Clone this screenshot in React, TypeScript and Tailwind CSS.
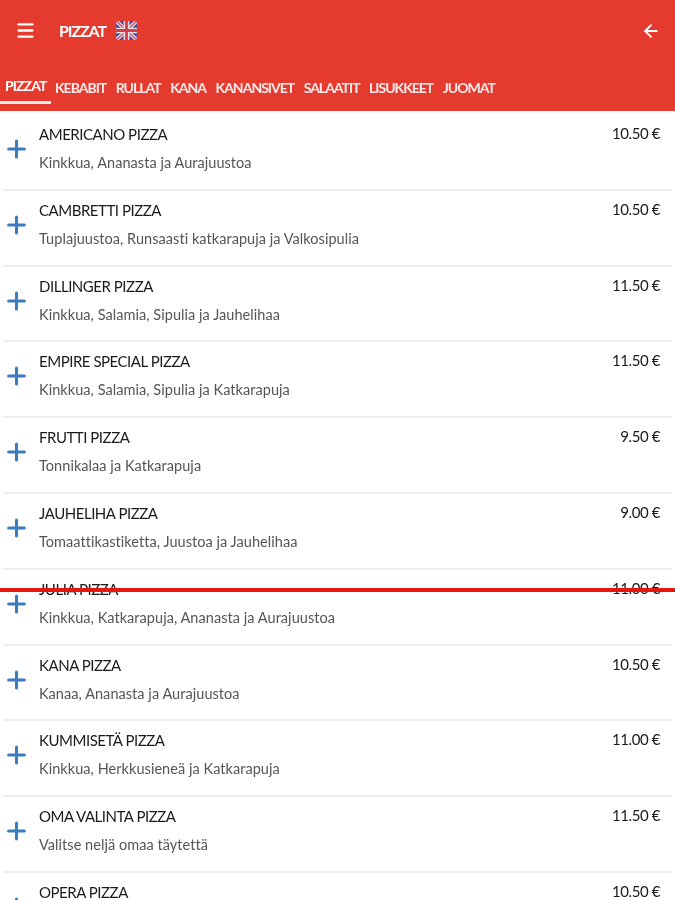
import React from 'react';
import { Menu, ArrowLeft, Plus } from 'lucide-react';

interface Pizza {
    name: string;
    description: string;
    price: string;
}

const tabs = ['KEBABIT', 'RULLAT', 'KANA', 'KANANSIVET', 'SALAATIT', 'LISUKKEET', 'JUOMAT'];

const pizzas: Pizza[] = [
    { name: 'AMERICANO PIZZA', description: 'Kinkkua, Ananasta ja Aurajuustoa', price: '10.50 €' },
    { name: 'CAMBRETTI PIZZA', description: 'Tuplajuustoa, Runsaasti katkarapuja ja Valkosipulia', price: '10.50 €' },
    { name: 'DILLINGER PIZZA', description: 'Kinkkua, Salamia, Sipulia ja Jauhelihaa', price: '11.50 €' },
    { name: 'EMPIRE SPECIAL PIZZA', description: 'Kinkkua, Salamia, Sipulia ja Katkarapuja', price: '11.50 €' },
    { name: 'FRUTTI PIZZA', description: 'Tonnikalaa ja Katkarapuja', price: '9.50 €' },
    { name: 'JAUHELIHA PIZZA', description: 'Tomaattikastiketta, Juustoa ja Jauhelihaa', price: '9.00 €' },
    { name: 'JULIA PIZZA', description: 'Kinkkua, Katkarapuja, Ananasta ja Aurajuustoa', price: '11.00 €' },
    { name: 'KANA PIZZA', description: 'Kanaa, Ananasta ja Aurajuustoa', price: '10.50 €' },
    { name: 'KUMMISETÄ PIZZA', description: 'Kinkkua, Herkkusieneä ja Katkarapuja', price: '11.00 €' },
    { name: 'OMA VALINTA PIZZA', description: 'Valitse neljä omaa täytettä', price: '11.50 €' },
    { name: 'OPERA PIZZA', description: 'Kinkkua, Salamia ja Ananasta', price: '10.50 €' }
];

const Flag = () => (
    <svg width="21" height="19" viewBox="0 0 22 20" className="ml-[10px] rounded-[3px]">
        <rect width="22" height="20" fill="#4a4f96" />
        <path d="M0 0L22 20M22 0L0 20" stroke="#e9d5de" strokeWidth="4" />
        <path d="M0 0L22 20M22 0L0 20" stroke="#c9506a" strokeWidth="1.4" />
        <path d="M11 0V20M0 10H22" stroke="#eddde2" strokeWidth="6" />
        <path d="M11 0V20M0 10H22" stroke="#d2404d" strokeWidth="3" />
    </svg>
);

const App = () => {
    return (
        <div className="relative h-[900px] overflow-hidden bg-white font-['Lato',sans-serif] blur-[0.6px]">
            <header className="h-[111px] bg-[#e53a2e] text-white">
                <div className="flex h-[61px] items-center pl-[15px] pr-[14px]">
                    <Menu size={21} strokeWidth={2.6} />
                    <h1 className="ml-[23px] text-[16px] font-bold tracking-[-1.1px]">PIZZAT</h1>
                    <Flag />
                    <ArrowLeft size={20} strokeWidth={2.2} className="ml-auto" />
                </div>
                <nav className="flex h-[50px] items-start">
                    <div className="h-[43px] w-[51px] border-b-[3px] border-white/90 pl-[5px] pt-[15px] text-[14px] leading-[20px] font-bold tracking-[-0.9px]">
                        PIZZAT
                    </div>
                    <div className="ml-[4px] flex gap-[9.5px] pt-[17px] text-[14px] leading-[20px] font-bold tracking-[-1px] text-white/90">
                        {tabs.map((tab) => (
                            <span key={tab}>{tab}</span>
                        ))}
                    </div>
                </nav>
            </header>
            <main className="pt-[4px]">
                {pizzas.map((pizza) => (
                    <div
                        key={pizza.name}
                        className="mx-[3px] flex h-[75.8px] border-b-2 border-[#eeeeee] pr-[12px]"
                    >
                        <Plus size={28} strokeWidth={2.7} className="mt-[20px] w-[27px] shrink-0 text-[#3b7cc0]" />
                        <div className="ml-[9px] min-w-0 flex-1">
                            <div className="mt-[9px] text-[15px] leading-[20px] tracking-[-0.47px] text-[#1a1a1a]">
                                {pizza.name}
                            </div>
                            <div className="mt-[9px] text-[14.5px] leading-[20px] tracking-[0.05px] text-[#555555]">
                                {pizza.description}
                            </div>
                        </div>
                        <div className="mt-[8px] text-[15px] leading-[20px] tracking-[-0.4px] text-[#1a1a1a]">
                            {pizza.price}
                        </div>
                    </div>
                ))}
            </main>
            <div className="absolute top-[588px] left-0 h-[4px] w-full bg-[#e3170d]" />
        </div>
    );
};

export default App;
